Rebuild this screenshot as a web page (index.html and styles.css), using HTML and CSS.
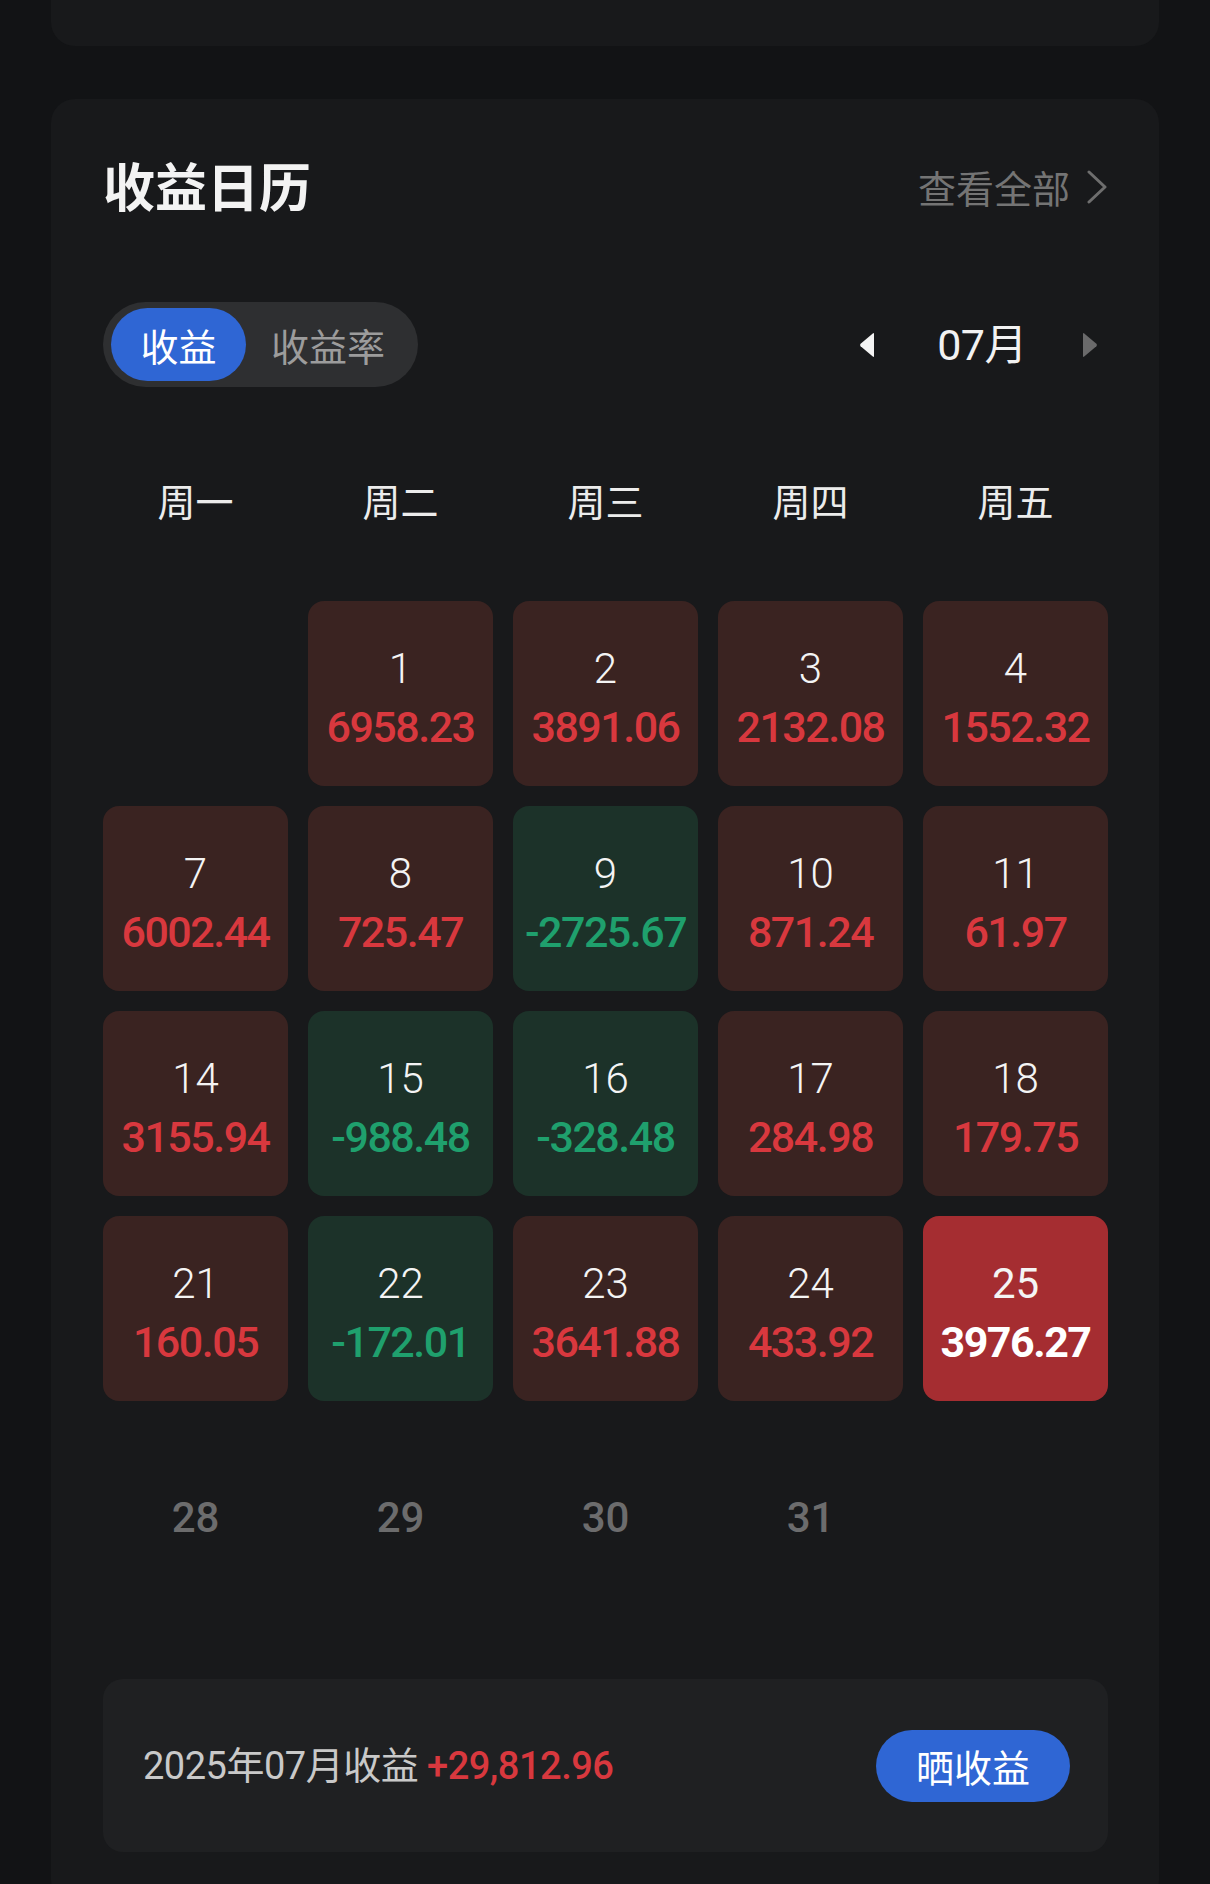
FILE: index.html
```html
<!DOCTYPE html>
<html lang="zh-CN">
<head>
<meta charset="utf-8">
<title>收益日历</title>
<link rel="stylesheet" href="styles.css">
</head>
<body>
<div class="top-card"></div>
<section class="card">
  <header class="card-head">
    <h2 class="title">收益日历</h2>
    <a class="more">查看全部<svg class="chev" width="22" height="34" viewBox="0 0 22 34"><polyline points="3,2 19,17 3,32" fill="none" stroke="#6e6e6e" stroke-width="3" stroke-linecap="round" stroke-linejoin="round"/></svg></a>
  </header>

  <div class="controls">
    <div class="toggle">
      <span class="tg tg-on">收益</span>
      <span class="tg tg-off">收益率</span>
    </div>
    <div class="month-nav">
      <svg class="tri" width="16" height="26" viewBox="0 0 16 26"><path d="M15 2 Q15 0.5 13.8 1.4 L1.6 11.8 Q0.4 13 1.6 14.2 L13.8 24.6 Q15 25.5 15 24 Z" fill="#f4f4f4"/></svg>
      <span class="month">07月</span>
      <svg class="tri" width="16" height="26" viewBox="0 0 16 26"><path d="M1 2 Q1 0.5 2.2 1.4 L14.4 11.8 Q15.6 13 14.4 14.2 L2.2 24.6 Q1 25.5 1 24 Z" fill="#6a6a6b"/></svg>
    </div>
  </div>

  <div class="weekdays">
    <span>周一</span><span>周二</span><span>周三</span><span>周四</span><span>周五</span>
  </div>

  <div class="days">
    <div class="day empty"></div>
    <div class="day up"><span class="d">1</span><span class="v">6958.23</span></div>
    <div class="day up"><span class="d">2</span><span class="v">3891.06</span></div>
    <div class="day up"><span class="d">3</span><span class="v">2132.08</span></div>
    <div class="day up"><span class="d">4</span><span class="v">1552.32</span></div>

    <div class="day up"><span class="d">7</span><span class="v">6002.44</span></div>
    <div class="day up"><span class="d">8</span><span class="v">725.47</span></div>
    <div class="day down"><span class="d">9</span><span class="v">-2725.67</span></div>
    <div class="day up"><span class="d">10</span><span class="v">871.24</span></div>
    <div class="day up"><span class="d">11</span><span class="v">61.97</span></div>

    <div class="day up"><span class="d">14</span><span class="v">3155.94</span></div>
    <div class="day down"><span class="d">15</span><span class="v">-988.48</span></div>
    <div class="day down"><span class="d">16</span><span class="v">-328.48</span></div>
    <div class="day up"><span class="d">17</span><span class="v">284.98</span></div>
    <div class="day up"><span class="d">18</span><span class="v">179.75</span></div>

    <div class="day up"><span class="d">21</span><span class="v">160.05</span></div>
    <div class="day down"><span class="d">22</span><span class="v">-172.01</span></div>
    <div class="day up"><span class="d">23</span><span class="v">3641.88</span></div>
    <div class="day up"><span class="d">24</span><span class="v">433.92</span></div>
    <div class="day today"><span class="d">25</span><span class="v">3976.27</span></div>

    <div class="day future"><span class="d">28</span></div>
    <div class="day future"><span class="d">29</span></div>
    <div class="day future"><span class="d">30</span></div>
    <div class="day future"><span class="d">31</span></div>
    <div class="day empty"></div>
  </div>

  <div class="summary">
    <div class="sum-text">2025年07月收益 <span class="sum-val">+29,812.96</span></div>
    <button class="share">晒收益</button>
  </div>
</section>
</body>
</html>
```

FILE: styles.css
```css
* { box-sizing: border-box; }

html, body {
  margin: 0;
  padding: 0;
  background: #121315;
}

body {
  font-family: Roboto, "Noto Sans CJK SC", "Noto Sans", sans-serif;
  color: #ececec;
  overflow: hidden;
}

.top-card {
  height: 46px;
  margin: 0 51px;
  background: #18191b;
  border-radius: 0 0 24px 24px;
}

.card {
  margin: 53px 51px 0;
  background: #18191b;
  border-radius: 24px;
  padding: 59px 51px 52px 52px;
}

.card-head {
  display: flex;
  justify-content: space-between;
  align-items: center;
  height: 60px;
}

.title {
  margin: 0 0 7px;
  font-family: "Noto Sans CJK SC", sans-serif;
  font-size: 52px;
  line-height: 60px;
  font-weight: 700;
  color: #f3f3f3;
}

.more {
  display: flex;
  align-items: center;
  margin-bottom: 2px;
  font-family: "Noto Sans CJK SC", sans-serif;
  font-size: 38px;
  line-height: 50px;
  color: #747474;
}

.chev {
  display: block;
  margin-left: 16px;
}

.controls {
  display: flex;
  justify-content: space-between;
  align-items: center;
  margin-top: 84px;
  height: 85px;
}

.toggle {
  display: flex;
  padding: 6px 8px 6px 8px;
  height: 85px;
  background: #2e2f31;
  border-radius: 43px;
}

.tg {
  display: flex;
  align-items: center;
  justify-content: center;
  height: 73px;
  font-family: "Noto Sans CJK SC", sans-serif;
  font-size: 38px;
  border-radius: 37px;
}

.tg-on {
  width: 135px;
  background: #2f66d4;
  color: #ffffff;
}

.tg-off {
  width: 164px;
  color: #9c9c9c;
}

.month-nav {
  display: flex;
  align-items: center;
  padding-right: 10px;
}

.tri { display: block; }

.month {
  margin: 0 55px 0 62px;
  font-size: 43px;
  line-height: 50px;
  color: #f2f2f2;
  letter-spacing: -0.5px;
}

.weekdays {
  display: grid;
  grid-template-columns: repeat(5, 185px);
  column-gap: 20px;
  margin-top: 88px;
  font-family: "Noto Sans CJK SC", sans-serif;
  font-size: 38px;
  line-height: 50px;
  color: #ececec;
  text-align: center;
}

.days {
  display: grid;
  grid-template-columns: repeat(5, 185px);
  grid-auto-rows: 185px;
  gap: 20px;
  margin-top: 76px;
}

.day {
  display: flex;
  flex-direction: column;
  align-items: center;
  padding-top: 42px;
  border-radius: 16px;
}

.day .d {
  font-size: 42px;
  line-height: 52px;
  color: #f4f4f4;
  font-weight: 300;
}

.day .v {
  font-size: 43px;
  line-height: 65px;
  font-weight: 500;
  letter-spacing: -1.5px;
}

.up { background: #3a2321; }
.up .v { color: #d8383e; }

.down { background: #1c3229; }
.down .v { color: #1fa06d; }

.today { background: #a52d31; }
.today .d { font-weight: 400; }
.today .v { color: #ffffff; font-weight: 700; }

.future { padding-top: 71px; }
.future .d { color: #6c6c6d; font-weight: 500; }

.summary {
  display: flex;
  align-items: center;
  justify-content: space-between;
  margin-top: 73px;
  height: 173px;
  padding: 0 38px 0 40px;
  background: #1f2022;
  border-radius: 20px;
}

.sum-text {
  font-size: 38px;
  line-height: 50px;
  color: #c9c9c9;
  letter-spacing: -0.5px;
}

.sum-val {
  color: #d8383e;
  font-weight: 500;
}

.share {
  width: 194px;
  height: 72px;
  border: 0;
  border-radius: 36px;
  background: #2f66d4;
  color: #ffffff;
  font-family: "Noto Sans CJK SC", sans-serif;
  font-size: 38px;
  padding: 0;
}
```
